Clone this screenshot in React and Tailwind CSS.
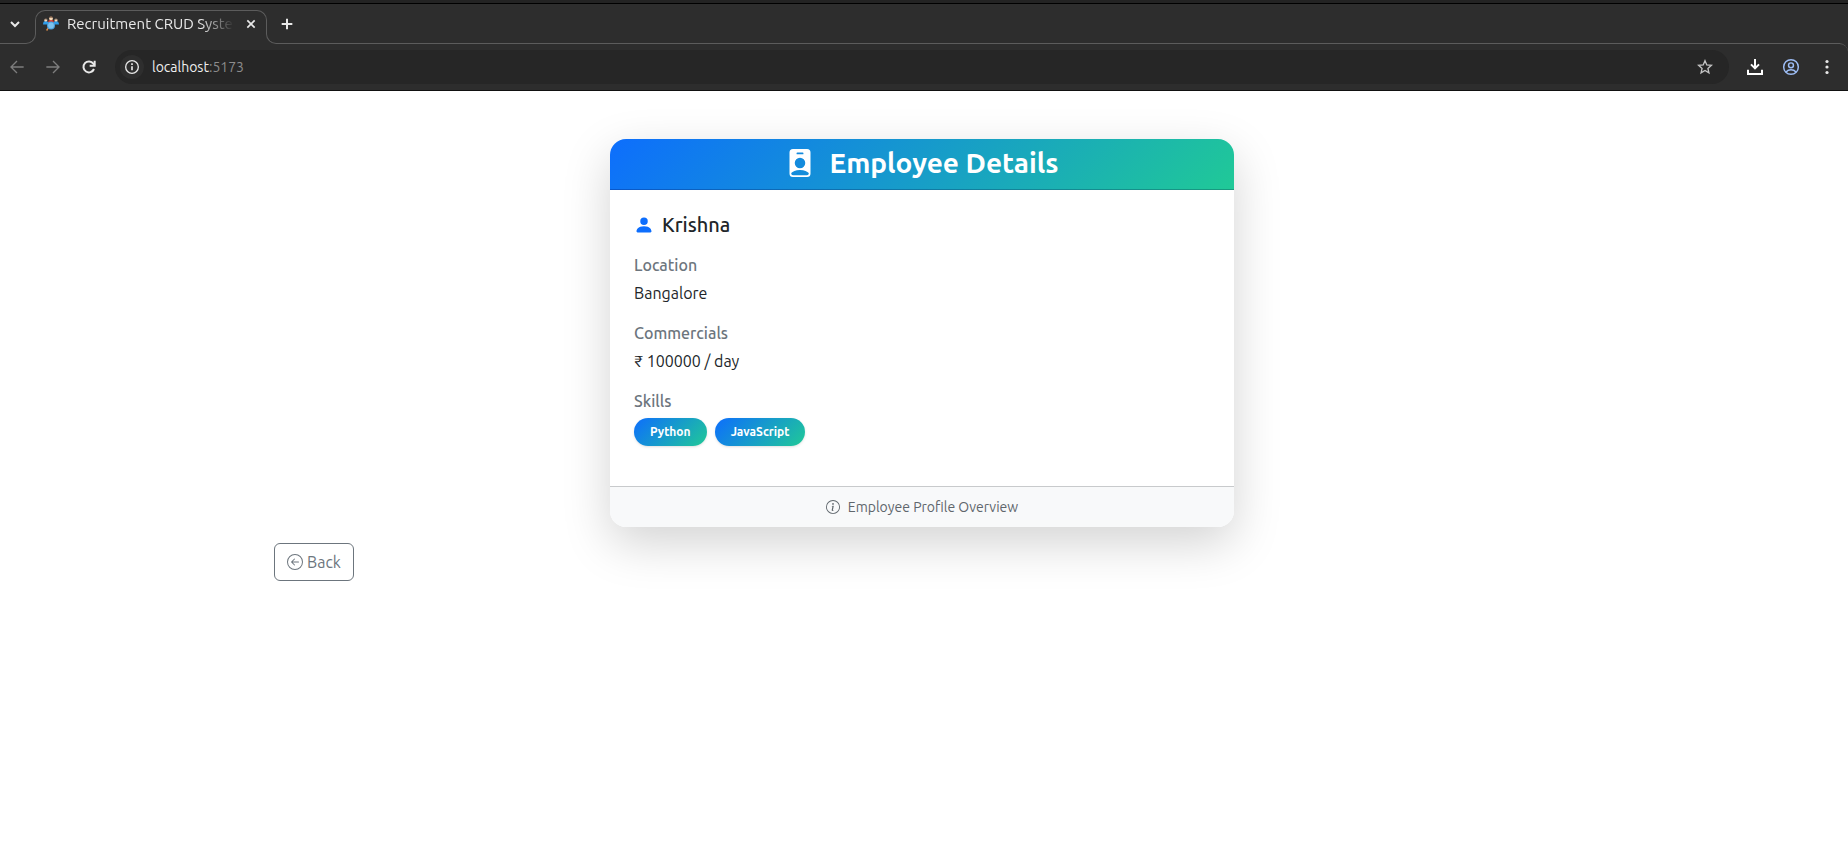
import React from "react";
import {
  BsArrowLeftCircle,
  BsInfoCircle,
  BsPersonBadgeFill,
  BsPersonFill,
} from "react-icons/bs";

function StrokeIcon({ className, children, width = 2 }) {
  return (
    <svg
      className={className}
      viewBox="0 0 24 24"
      fill="none"
      stroke="currentColor"
      strokeWidth={width}
      aria-hidden="true"
    >
      {children}
    </svg>
  );
}

function TeamIcon() {
  return (
    <svg className="size-4 shrink-0" viewBox="0 0 16 16" aria-hidden="true">
      <path d="M0 8.500c0-2.500 1-3.500 2.500-3.500S6 6 6 8.500z" fill="#2f9be8" />
      <path d="M10 8.500C10 6 11 5 12.800 5S16 6 16 8.500z" fill="#2f9be8" />
      <path d="M5 7c0-2 1-3.200 3-3.200S11 5 11 7z" fill="#d9362b" />
      <circle cx="8" cy="2.400" r="1.900" fill="#f7d9b8" />
      <path d="M6.100 2.200a1.900 1.900 0 0 1 3.800 0C9 1.300 7 1.300 6.100 2.200z" fill="#6b4a36" />
      <circle cx="2.800" cy="4" r="1.600" fill="#f7d9b8" />
      <path d="M1.200 3.800a1.600 1.600 0 0 1 3.200 0C3.500 3 2 3 1.200 3.800z" fill="#463a35" />
      <circle cx="13" cy="4" r="1.600" fill="#f7d9b8" />
      <path d="M11.400 3.800a1.600 1.600 0 0 1 3.200 0C14 3 12.200 3 11.400 3.800z" fill="#463a35" />
      <path d="m5.600 11.500-2 3" stroke="#d98b4a" strokeWidth="1.400" />
      <circle cx="8" cy="9.500" r="4" fill="#4a9fdc" />
      <circle cx="8" cy="9.500" r="2.900" fill="#7cc2ee" />
    </svg>
  );
}

function TabStrip() {
  return (
    <div className="flex h-10 text-[#e8e8e8]">
      <div className="relative w-9 shrink-0">
        <button aria-label="Search tabs" className="flex h-10 w-[30px] items-center justify-center">
          <StrokeIcon className="size-4" width={3}>
            <path d="m6 9 6 6 6-6" />
          </StrokeIcon>
        </button>
        <span className="pointer-events-none absolute inset-x-0 bottom-0 h-3 rounded-br-[10px] border-r border-b border-[#5c5c5c]" />
      </div>
      <div className="-ml-px mt-1.5 mb-3 flex w-58 shrink-0 items-center rounded-t-[10px] border-x border-t border-[#5c5c5c] px-[7px] pt-1">
        <TeamIcon />
        <span className="ml-2 w-[167px] overflow-hidden whitespace-nowrap text-[15px] leading-5 mask-r-from-80% mask-r-to-100%">
          Recruitment CRUD System
        </span>
        <button aria-label="Close tab" className="ml-auto flex size-4 items-center justify-center">
          <StrokeIcon className="size-4" width={2.5}>
            <path d="m6.500 6.500 11 11m0-11-11 11" />
          </StrokeIcon>
        </button>
      </div>
      <div className="relative -ml-px flex-1">
        <button aria-label="New tab" className="ml-1 flex h-10 w-[34px] items-center justify-center">
          <StrokeIcon className="size-4" width={3}>
            <path d="M12 4v16M4 12h16" />
          </StrokeIcon>
        </button>
        <span className="pointer-events-none absolute right-2 bottom-0 left-0 h-3 rounded-bl-[10px] border-b border-l border-[#5c5c5c]" />
        <span className="pointer-events-none absolute right-0 -bottom-2 size-[9px] rounded-tr-[10px] border-t border-[#5c5c5c]" />
      </div>
    </div>
  );
}

function Toolbar() {
  return (
    <div className="flex h-[47px] items-center border-b border-[#111] px-[3px] text-[#e8e8e8]">
      <button aria-label="Go back" disabled className="flex h-8 w-7 items-center justify-center text-[#7d7d7d]">
        <StrokeIcon className="size-4">
          <path d="M22 12H3m9-9-9 9 9 9" />
        </StrokeIcon>
      </button>
      <button aria-label="Go forward" disabled className="ml-2 flex h-8 w-7 items-center justify-center text-[#7d7d7d]">
        <StrokeIcon className="size-4">
          <path d="M2 12h19m-9-9 9 9-9 9" />
        </StrokeIcon>
      </button>
      <button aria-label="Reload" className="ml-2 flex h-8 w-7 items-center justify-center">
        <StrokeIcon className="size-4" width={3}>
          <path d="M19.500 15A8.200 8.200 0 1 1 18.500 7L20.500 9" />
          <path d="M20.500 2.500v7.500h-7.500" />
        </StrokeIcon>
      </button>
      <div className="ml-3 flex h-[34px] flex-1 items-center rounded-full bg-[#262626] pr-4 pl-[5px]">
        <button aria-label="Site information" className="flex size-6 items-center justify-center rounded-full bg-[#2e2e2e]">
          <StrokeIcon className="size-4">
            <circle cx="12" cy="12" r="9.500" />
            <path d="M12 11v6M12 6.500v2.500" strokeWidth="2.500" />
          </StrokeIcon>
        </button>
        <a href="http://localhost:5173" className="ml-2 flex-1 text-[14px] leading-5 text-[#eee]">
          localhost<span className="text-[#8c8c8c]">:5173</span>
        </a>
        <button aria-label="Bookmark this tab" className="flex size-4 items-center justify-center text-[#c4c4c4]">
          <StrokeIcon className="size-4">
            <path d="m12 2.500 2.700 6.400 6.900.6-5.200 4.600 1.500 6.800-5.900-3.600-5.900 3.600 1.500-6.800-5.200-4.600 6.900-.6z" />
          </StrokeIcon>
        </button>
      </div>
      <button aria-label="Downloads" className="ml-2 flex h-8 w-9 items-center justify-center text-white">
        <StrokeIcon className="size-4 overflow-visible" width={3}>
          <path d="M12 0v14m-6-6 6 6 6-6M1.500 16v6.500h21V16" />
        </StrokeIcon>
      </button>
      <button aria-label="Profile" className="flex h-8 w-9 items-center justify-center text-[#9dbdf5]">
        <StrokeIcon className="size-4 overflow-visible" width={2.2}>
          <circle cx="12" cy="12" r="11" />
          <circle cx="12" cy="9.500" r="3.700" />
          <path d="M4.500 19.500c4-4.500 11-4.500 15 0" />
        </StrokeIcon>
      </button>
      <button aria-label="Menu" className="flex h-8 w-9 items-center justify-center">
        <svg className="size-4" viewBox="0 0 16 16" fill="currentColor" aria-hidden="true">
          <circle cx="8" cy="2.500" r="1.600" />
          <circle cx="8" cy="8" r="1.600" />
          <circle cx="8" cy="13.500" r="1.600" />
        </svg>
      </button>
    </div>
  );
}

function Field({ label, children }) {
  return (
    <div className="mt-4">
      <dt className="text-[16px] leading-6 font-[550] text-[#6c757d]">{label}</dt>
      <dd className="mt-1 text-[16px] leading-6">{children}</dd>
    </div>
  );
}

function Skill({ children }) {
  return (
    <li className="rounded-full bg-[linear-gradient(135deg,#0d6efd,#20c997)] px-4 py-2 text-[12px] leading-3 font-bold text-white shadow-sm">
      {children}
    </li>
  );
}

function EmployeeCard() {
  return (
    <article className="mx-auto w-full max-w-[624px] overflow-hidden rounded-2xl bg-white shadow-[0_16px_48px_rgba(0,0,0,0.175)]">
      <header className="flex items-center justify-center gap-4 border-b border-black/20 bg-[linear-gradient(135deg,#0d6efd,#20c997)] pt-[7px] pb-[9px] text-white">
        <BsPersonBadgeFill className="size-7" aria-hidden="true" />
        <h1 className="text-[28px] leading-[34px] font-bold">Employee Details</h1>
      </header>
      <div className="px-6 pt-[23px] pb-10">
        <h2 className="flex items-center gap-2 text-[20px] leading-6 font-[550]">
          <BsPersonFill className="size-5 text-[#0d6efd]" aria-hidden="true" />
          Krishna
        </h2>
        <dl>
          <Field label="Location">Bangalore</Field>
          <Field label="Commercials">₹ 100000 / day</Field>
          <Field label="Skills">
            <ul className="flex gap-2 pt-px">
              <Skill>Python</Skill>
              <Skill>JavaScript</Skill>
            </ul>
          </Field>
        </dl>
      </div>
      <footer className="flex items-center justify-center gap-2 border-t border-[#c8cacc] bg-[#f8f9fa] py-2 text-[14px] leading-6 text-[#5f666c]">
        <BsInfoCircle className="size-3.5" aria-hidden="true" />
        Employee Profile Overview
      </footer>
    </article>
  );
}

export default function App() {
  return (
    <div className="min-h-screen bg-white font-['Ubuntu','Noto_Sans',sans-serif] text-[#212529]">
      <div className="border-t-3 border-[#232323] bg-[#2d2d2d]">
        <div className="border-t border-black">
          <TabStrip />
          <Toolbar />
        </div>
      </div>
      <div className="pr-1">
        <main className="mx-auto max-w-[1296px] pt-12">
          <EmployeeCard />
          <button className="mt-4 flex h-[38px] items-center gap-1 rounded-md border border-[#6c757d] px-3 text-[16px] leading-6 text-[#6c757d]">
            <BsArrowLeftCircle className="size-4" aria-hidden="true" />
            Back
          </button>
        </main>
      </div>
    </div>
  );
}
